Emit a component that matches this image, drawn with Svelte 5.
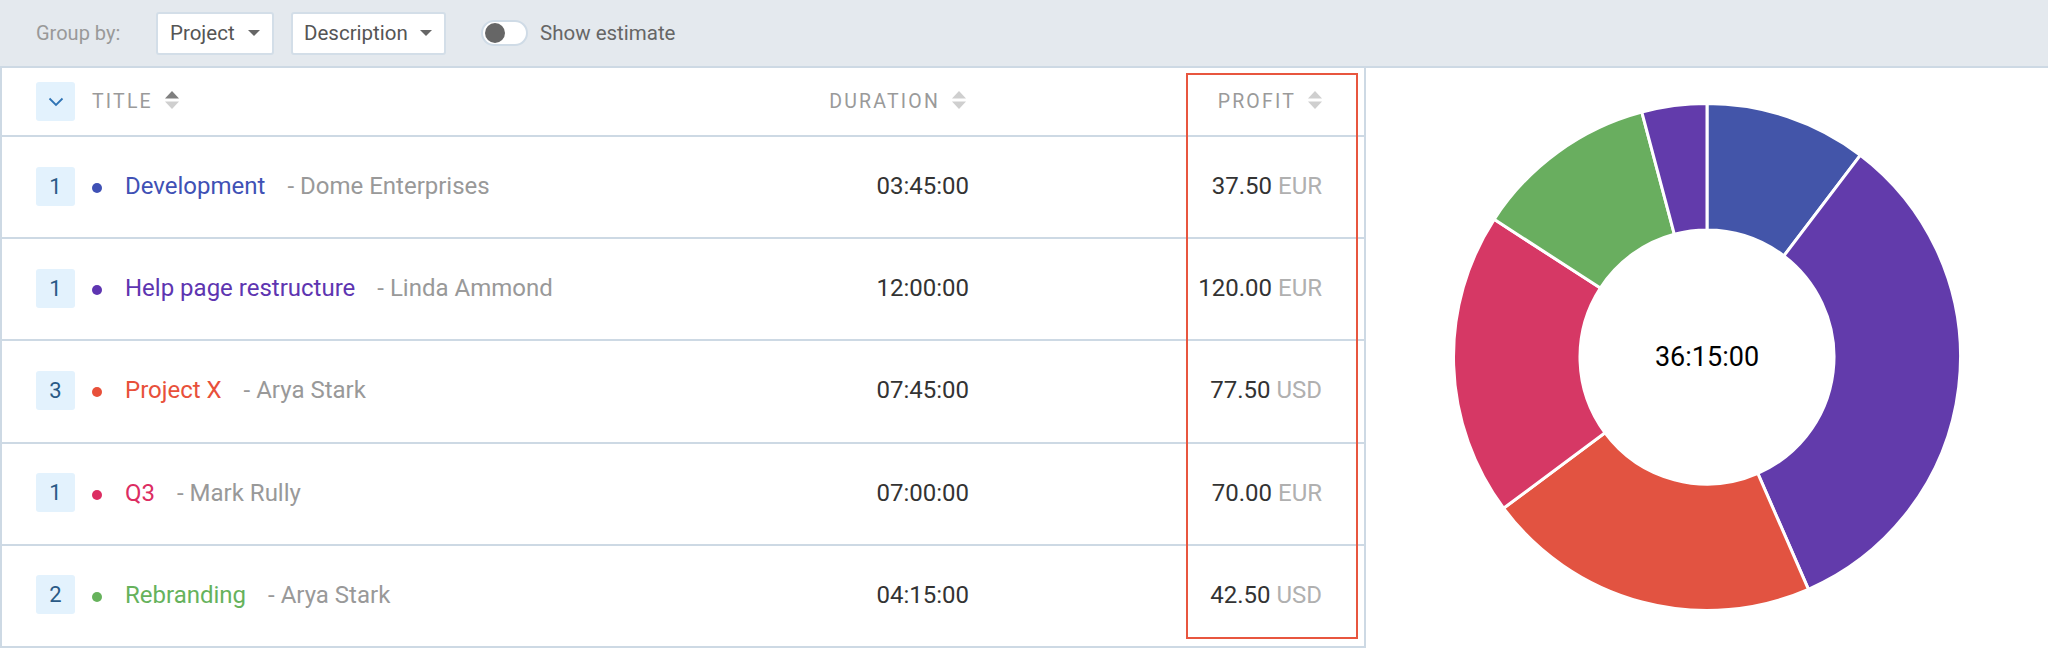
<script>
  const rows = [
    { n: 1, title: 'Development', sub: 'Dome Enterprises', color: '#3f51b5', dur: '03:45:00', profit: '37.50', cur: 'EUR' },
    { n: 1, title: 'Help page restructure', sub: 'Linda Ammond', color: '#5e35b1', dur: '12:00:00', profit: '120.00', cur: 'EUR' },
    { n: 3, title: 'Project X', sub: 'Arya Stark', color: '#e8503a', dur: '07:45:00', profit: '77.50', cur: 'USD' },
    { n: 1, title: 'Q3', sub: 'Mark Rully', color: '#dc2d62', dur: '07:00:00', profit: '70.00', cur: 'EUR' },
    { n: 2, title: 'Rebranding', sub: 'Arya Stark', color: '#66b25c', dur: '04:15:00', profit: '42.50', cur: 'USD' }
  ];

  const slices = [
    { m: 225, c: '#4355a9' },
    { m: 720, c: '#623bab' },
    { m: 465, c: '#e25341' },
    { m: 420, c: '#d63865' },
    { m: 255, c: '#69ae5f' },
    { m: 90, c: '#623bab' }
  ];
  const total = 2175;
  const R = 253.5;
  const r = 127;
  const pt = (rad, a) => `${(rad * Math.sin(a)).toFixed(2)} ${(-rad * Math.cos(a)).toFixed(2)}`;
  let acc = 0;
  const arcs = slices.map((s) => {
    const a0 = (acc / total) * Math.PI * 2;
    acc += s.m;
    const a1 = (acc / total) * Math.PI * 2;
    const large = a1 - a0 > Math.PI ? 1 : 0;
    return {
      c: s.c,
      d: `M${pt(R, a0)}A${R} ${R} 0 ${large} 1 ${pt(R, a1)}L${pt(r, a1)}A${r} ${r} 0 ${large} 0 ${pt(r, a0)}Z`
    };
  });
</script>

<div class="page">
  <div class="toolbar">
    <span class="group-label">Group by:</span>
    <div class="select project">Project <span class="caret"></span></div>
    <div class="select description">Description <span class="caret"></span></div>
    <div class="toggle"><span class="knob"></span></div>
    <span class="toggle-label">Show estimate</span>
  </div>

  <div class="content">
    <div class="table">
      <div class="row head">
        <div class="title-cell">
          <span class="badge chevron">
            <svg width="16" height="10" viewBox="0 0 16 10"><path d="M1.5 1.5 8 8l6.5-6.5" fill="none" stroke="#2f74b5" stroke-width="1.8" /></svg>
          </span>
          <span class="th">TITLE</span>
          <svg class="sort" width="14" height="18" viewBox="0 0 14 18"><path d="M7 0l7 7.5H0z" fill="#7f7f7f" /><path d="M7 18l7-7.5H0z" fill="#cfcfcf" /></svg>
        </div>
        <div class="dur-cell head-dur">
          <span class="th">DURATION</span>
          <svg class="sort" width="14" height="18" viewBox="0 0 14 18"><path d="M7 0l7 7.5H0z" fill="#cfcfcf" /><path d="M7 18l7-7.5H0z" fill="#cfcfcf" /></svg>
        </div>
        <div class="profit-cell">
          <span class="th">PROFIT</span>
          <svg class="sort" width="14" height="18" viewBox="0 0 14 18"><path d="M7 0l7 7.5H0z" fill="#cfcfcf" /><path d="M7 18l7-7.5H0z" fill="#cfcfcf" /></svg>
        </div>
      </div>

      {#each rows as row}
        <div class="row body-row">
          <div class="title-cell">
            <span class="badge">{row.n}</span>
            <span class="dot" style="background:{row.color}"></span>
            <span class="name" style="color:{row.color}">{row.title}</span>
            <span class="sub">- {row.sub}</span>
          </div>
          <div class="dur-cell">{row.dur}</div>
          <div class="profit-cell"><span class="amount">{row.profit}</span> <span class="cur">{row.cur}</span></div>
        </div>
      {/each}

      <div class="highlight"></div>
    </div>

    <div class="chart">
      <div class="donut">
        <svg width="510" height="510" viewBox="-255 -255 510 510">
          {#each arcs as a}
            <path d={a.d} fill={a.c} stroke="#fff" stroke-width="3" />
          {/each}
        </svg>
        <span class="total">36:15:00</span>
      </div>
    </div>
  </div>
</div>

<style>
  :global(body) {
    margin: 0;
    background: #fff;
  }
  .page {
    width: 2048px;
    height: 649px;
    overflow: hidden;
    font-family: Roboto, "Liberation Sans", sans-serif;
    font-size: 24px;
    color: #333;
  }
  .toolbar {
    height: 66px;
    box-sizing: content-box;
    display: flex;
    align-items: center;
    padding-left: 36px;
    background: #e4e9ee;
    border-bottom: 2px solid #cdd9e4;
    border-left: 2px solid #cdd9e4;
    margin-left: -2px;
    font-size: 20.5px;
  }
  .group-label {
    color: #999;
    width: 120px;
    margin-left: 0;
    font-size: 20px;
  }
  .select {
    box-sizing: border-box;
    height: 43px;
    display: flex;
    align-items: center;
    justify-content: space-between;
    padding: 0 12px;
    background: #fff;
    border: 2px solid #d3dee8;
    border-radius: 3px;
    color: #555;
  }
  .project {
    width: 118px;
    margin-right: 17px;
  }
  .description {
    width: 155px;
    margin-right: 35px;
    padding-left: 11px;
  }
  .caret {
    width: 0;
    height: 0;
    border-left: 6px solid transparent;
    border-right: 6px solid transparent;
    border-top: 6px solid #666;
  }
  .toggle {
    box-sizing: border-box;
    width: 47px;
    height: 26px;
    padding: 2px;
    background: #fff;
    border: 2px solid #cfdbe6;
    border-radius: 13px;
  }
  .knob {
    display: block;
    width: 20px;
    height: 20px;
    margin-top: -1px;
    border-radius: 50%;
    background: #666;
  }
  .toggle-label {
    margin-left: 12px;
    color: #666;
  }
  .content {
    display: flex;
  }
  .table {
    position: relative;
    box-sizing: border-box;
    width: 1366px;
    flex: none;
    border-left: 2px solid #cdd9e4;
    border-right: 2px solid #cdd9e4;
  }
  .row {
    display: flex;
    align-items: center;
    height: 102.2px;
    box-sizing: border-box;
    border-bottom: 2px solid #cdd9e4;
  }
  .body-row {
    padding-bottom: 2px;
  }
  .row.head {
    height: 69px;
  }
  .title-cell {
    width: 760px;
    display: flex;
    align-items: center;
    padding-left: 34px;
    box-sizing: border-box;
  }
  .badge {
    width: 39px;
    height: 39px;
    flex: none;
    display: flex;
    align-items: center;
    justify-content: center;
    background: #e3f2fd;
    border-radius: 3px;
    color: #2a5a86;
    font-size: 22px;
  }
  .dot {
    width: 10px;
    height: 10px;
    border-radius: 50%;
    margin: 4px 23px 0 17px;
    flex: none;
  }
  .sub {
    color: #999;
    margin-left: 22px;
  }
  .th {
    color: #9a9a9a;
    font-size: 19.5px;
    letter-spacing: 2.2px;
  }
  .chevron + .th {
    margin-left: 17px;
  }
  .sort {
    margin-left: 12px;
    margin-bottom: 4px;
  }
  .dur-cell {
    width: 207px;
    text-align: right;
    color: #333;
  }
  .head-dur {
    display: flex;
    align-items: center;
    justify-content: flex-end;
    padding-right: 3px;
    box-sizing: border-box;
  }
  .profit-cell {
    width: 353px;
    display: flex;
    align-items: center;
    justify-content: flex-end;
    gap: 6px;
  }
  .profit-cell .sort {
    margin-left: 6px;
  }
  .cur {
    color: #b0b0b0;
  }
  .highlight {
    position: absolute;
    left: 1184px;
    top: 5px;
    width: 172px;
    height: 566px;
    box-sizing: border-box;
    border: 2px solid #e8563f;
    pointer-events: none;
  }
  .chart {
    flex: 1;
    display: flex;
    justify-content: center;
    padding-top: 34px;
  }
  .donut {
    position: relative;
    width: 510px;
    height: 510px;
  }
  .donut svg {
    display: block;
  }
  .total {
    position: absolute;
    inset: 0;
    display: flex;
    align-items: center;
    justify-content: center;
    color: #000;
    font-size: 27px;
  }
</style>
